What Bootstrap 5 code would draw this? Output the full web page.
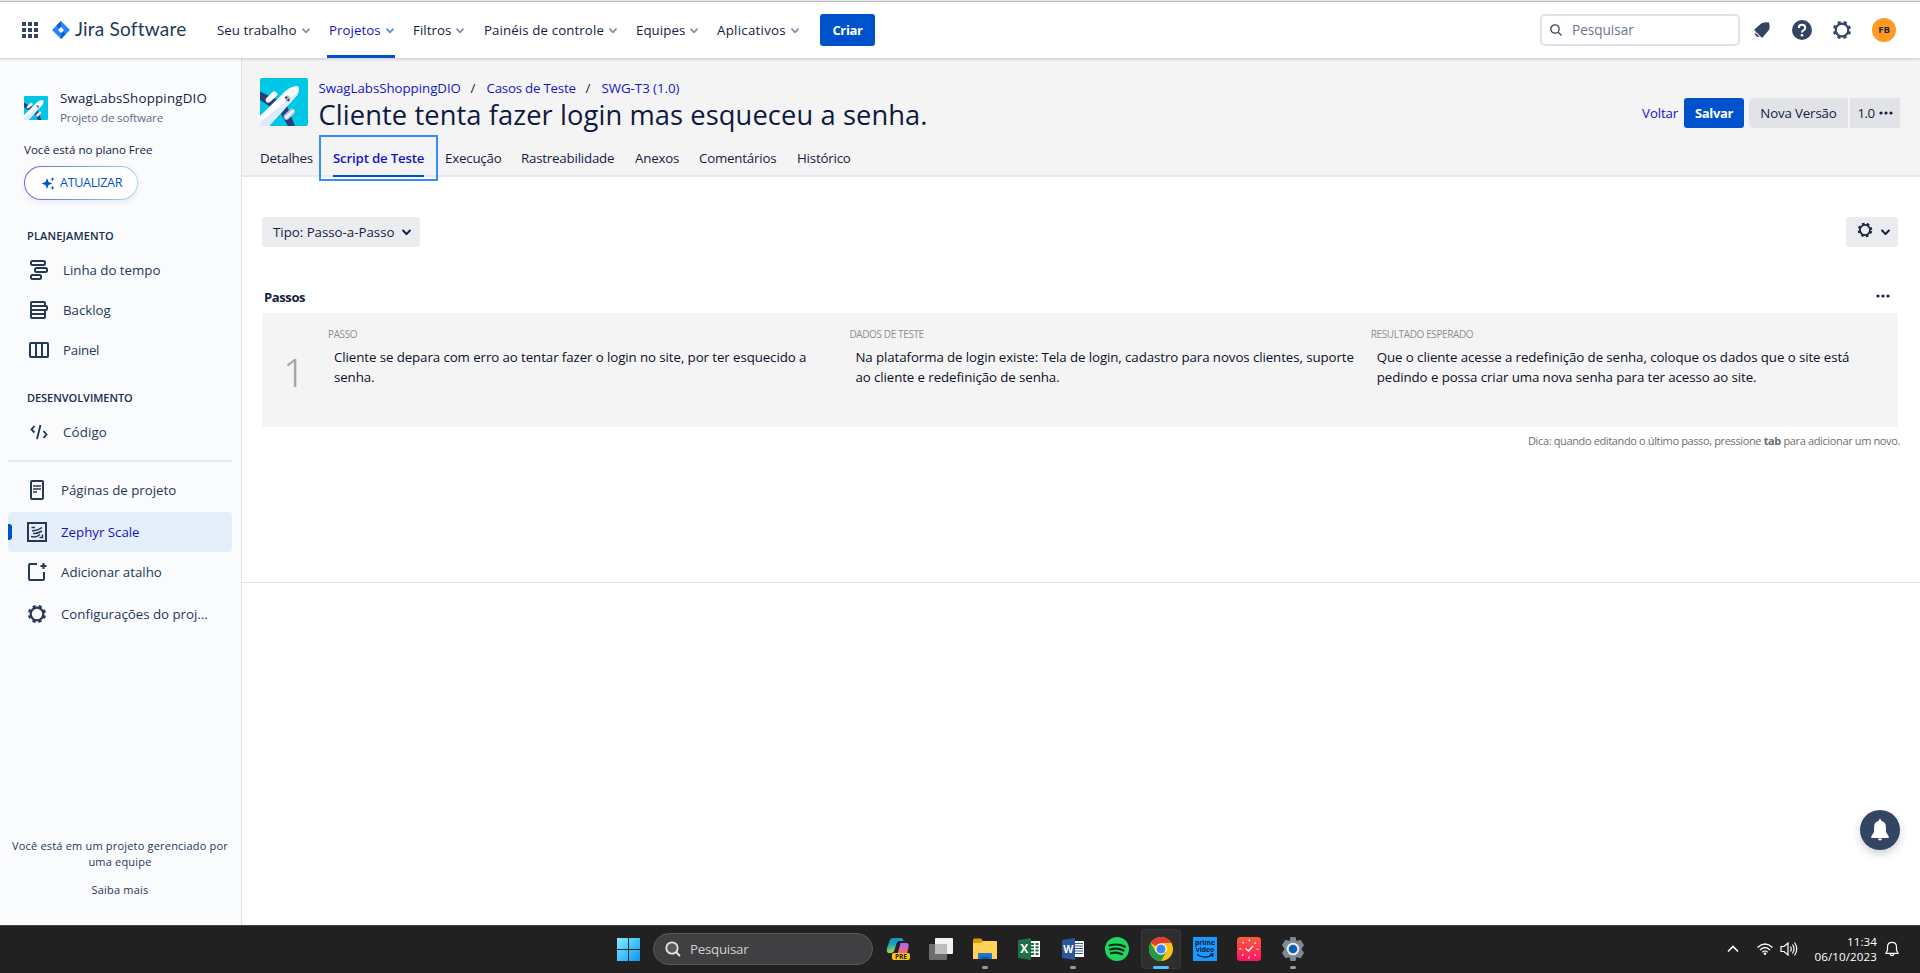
<!DOCTYPE html>
<html lang="pt-BR">
<head>
<meta charset="utf-8">
<title>Cliente tenta fazer login mas esqueceu a senha. - Jira</title>
<link href="https://cdn.jsdelivr.net/npm/bootstrap@5.3.0/dist/css/bootstrap.min.css" rel="stylesheet">
<style>
:root{--ink:#172b4d;--blue:#0052cc;--link:#1414c4}
body{font-family:"Open Sans","Noto Sans",sans-serif;font-size:13.3px;line-height:20px;color:#14213f;height:973px;overflow:hidden;background:#fff;letter-spacing:-.02px}
svg{display:block;flex:none}
a{text-decoration:none;color:inherit}
.strip{height:2px;background:#e4e4e4;border-bottom:1px solid #c0c0c0}
.topbar{height:57px;border-bottom:1px solid #d5d8de;padding:0 24px 0 22px;box-shadow:0 1px 2px rgba(9,30,66,.12);z-index:2;position:relative;background:#fff}
.logo{margin-left:14px}
.brand{font-family:Lato,sans-serif;font-size:19px;color:#253858;width:142px;margin-left:5px;letter-spacing:.22px;line-height:20px;padding-bottom:2px}
.topnav{display:grid;grid-template-columns:112px 84px 71px 152px 81px 103px;height:100%}
.topnav a{display:flex;align-items:center;gap:5px;font-weight:500;white-space:nowrap;position:relative;letter-spacing:.05px}
.topnav a:nth-child(4){letter-spacing:.1px}
.topnav a:last-child{letter-spacing:.26px}
.topnav svg{margin-top:2px;color:#8590a2}
.topnav a.on{color:var(--link)}
.topnav a.on svg{color:#5b8fe0}
.topnav a.on::after{content:"";position:absolute;left:-2px;width:68px;bottom:0;height:3px;background:var(--blue)}
.btn-jira{background:var(--blue);color:#fff;font-weight:700;font-size:13px;letter-spacing:-.36px;border:0;border-radius:3px;padding:0;line-height:20px}
.btn-criar{width:55px;height:32px}
.btn-salvar{width:60px;height:30px}
.searchbox{width:200px;height:32px;border:2px solid #dfe1e6;border-radius:5px;color:#6b778c;gap:10px;padding-left:8px;font-size:13.6px}
.who{width:24px;height:24px;margin-left:20px;background:#ff991f;font-size:9.6px;font-weight:700;color:#172b4d;letter-spacing:0}
.side{width:242px;background:#fafbfd;border-right:1px solid #dfe1e6;padding:30px 9px 27px 8px;flex:none}
.side .pname{font-weight:500;letter-spacing:.2px}
.side .psub{font-size:11.6px;margin-top:2px;color:#5e6c84;letter-spacing:-.16px}
.side .plan{font-size:11.6px;line-height:18px;margin-top:13px;font-weight:500;padding-top:1px;margin-bottom:-1px}
.side .sec{font-size:11px;font-weight:600;height:16px;line-height:16px;padding-left:19px;color:#172b4d;margin:20px 0 6px;letter-spacing:-.05px}
.side .sec1{margin-top:28px;letter-spacing:.15px}
.side .item{height:40px;padding-left:21px;color:#253858}
.side .item span{margin-left:14px;white-space:nowrap}
.side .low{padding-left:19px}
.side .gap2{margin-top:2px}
.side .sel{background:#e5eefb;border-radius:4px;color:var(--link);position:relative}
.side .sel::before{content:"";position:absolute;left:0;top:12px;width:4px;height:16px;background:var(--blue);border-radius:0 3px 3px 0}
.rule{height:2px;background:#e6e7ea;margin:8px 0}
.upg{width:114px;height:34px;border-radius:17px;border:1px solid transparent;background:linear-gradient(#fff,#fff) padding-box,linear-gradient(90deg,#7b61d8,#6fb0ea 60%,#a8dde4) border-box;color:var(--blue);font-size:12.6px;letter-spacing:-.33px;box-shadow:0 2px 6px rgba(9,30,66,.08);padding-left:17px;gap:5px}
.foot{font-size:11px;line-height:16px;color:#253858;text-align:center;letter-spacing:.19px;margin:0 -8px 0 -8px}
.phead{height:118px;background:#f4f4f5;border-bottom:2px solid #e7e8ec;padding:19px 20px 0 18px}
.crumb{height:20px;color:var(--link);display:grid;grid-template-columns:152px 16px 99px 16px auto;white-space:nowrap;letter-spacing:-.04px}
.crumb .tight{letter-spacing:-.22px}
.crumb i{font-style:normal;color:#222}
.ttl{font-size:27.3px;line-height:34px;font-weight:500;color:#0d1a40;white-space:nowrap;letter-spacing:.09px}
.tabs{display:grid;grid-template:40px/73px 112px 76px 114px 64px 98px 60px;line-height:42px;width:max-content;white-space:nowrap;letter-spacing:-.2px}
.tabs .on{color:var(--link);font-weight:600;width:91px;position:relative;border-bottom:2px solid var(--blue)}
.tabs .on::after{content:"";position:absolute;inset:-2px -14px -6px;border:2px solid #388bff}
.acts{height:30px;margin-top:20px;letter-spacing:-.16px}
.gbtn{background:#e2e3e7;height:30px;color:#14213f}
.lbtn{background:#ebecf0;height:30px;border-radius:3px}
.panel{padding:40px 0 0 20px;height:406px;border-bottom:1px solid #dcdfe4}
.steptitle{margin-top:40px;height:20px;padding:0 30px 0 2px;font-size:13px;letter-spacing:-.38px}
.step{background:#f4f4f4;height:114px;border-radius:2px;padding-top:11px;margin-top:6px;width:1636px}
.num{width:66px;padding-left:21px;font-size:39px;color:#a3a3a3;font-weight:400;line-height:40px;padding-top:28px;flex:none;font-family:"Noto Sans","Open Sans",sans-serif;font-weight:300}
.colx{width:521.4px;flex:none}
.colx h6{font-size:10px;line-height:16px;color:#8f8f8f;font-weight:400;margin:2px 0 5px;letter-spacing:-.38px}
.colx p{margin:0 0 0 6px;line-height:20px;white-space:nowrap;color:#0b1028;letter-spacing:-.09px}
.hint{font-size:11px;color:#6f6f6f;line-height:16px;text-align:right;margin-top:6px;padding-right:20px;letter-spacing:-.365px}
.fab{position:absolute;left:1860px;top:810px;width:40px;height:40px;border-radius:50%;background:#344563;box-shadow:0 4px 8px rgba(9,30,66,.2)}
.task{height:48px;background:#222122;border-top:1px solid #474747;color:#fff;padding:0 20px 1px 617px}
.pill{width:220px;height:32px;border-radius:16px;background:#403f41;border:1px solid #59585a;color:#d0d0d0;padding-left:11px;gap:9px;font-size:13.3px;letter-spacing:-.25px;margin-left:13px;margin-right:3px}
.app{width:44px;height:46px;display:flex;align-items:center;justify-content:center;position:relative}
.app.run::after{content:"";position:absolute;bottom:3px;width:6px;height:3px;border-radius:2px;background:#9a9a9a}
.app.act::before{content:"";position:absolute;inset:3px 2px 3px;background:#2f2e2f;border:1px solid #3a3a3a;border-radius:4px}
.app.act svg{position:relative}
.app.act::after{width:16px;background:#4cc2ff}
.clock{font-size:11.6px;line-height:15px;text-align:right;letter-spacing:.1px;margin:0 7px 0 16px}
</style>
<script src="https://cdn.jsdelivr.net/npm/bootstrap@5.3.0/dist/js/bootstrap.bundle.min.js"></script>
</head>
<body class="d-flex flex-column">
<svg width="0" height="0" class="position-absolute">
<defs>
<symbol id="chev" viewBox="0 0 8 8"><path d="M1 2.2 4 5.4 7 2.2" fill="none" stroke="currentColor" stroke-width="1.8" stroke-linecap="round" stroke-linejoin="round"/></symbol>
<symbol id="gear" viewBox="0 0 20 20"><circle cx="10" cy="10" r="6.3" fill="none" stroke="currentColor" stroke-width="2.2"/><circle cx="10" cy="10" r="8" fill="none" stroke="currentColor" stroke-width="2.2" stroke-dasharray="3.2 3.083" stroke-dashoffset="-1.5"/></symbol>
<symbol id="dots" viewBox="0 0 14 4"><circle cx="2" cy="2" r="1.6"/><circle cx="7" cy="2" r="1.6"/><circle cx="12" cy="2" r="1.6"/></symbol>
<symbol id="plane" viewBox="0 0 48 48"><rect width="48" height="48" rx="2" fill="#00c7e5"/><path d="M0 13.500 18 22 12 30 0 22z" fill="#253f7d"/><path d="M21 36 27 28 35 48H28z" fill="#253f7d"/><path d="M6 20.500 12.500 14Q14.500 12.500 16.500 14.500T16.500 18L10 24Q7 25.500 6 23.500T6 20.500z" fill="#fff"/><path d="M24 37 31 30.500Q34 30 34.600 32.500T33.500 36.500L28 41.500Q25 42.500 24 40.500T24 37z" fill="#b3c3de"/><path d="M25 38.500 33.500 31l1 2.500L26 41.500z" fill="#eef3fb"/><path d="M0 38 26 12.500Q32 7.800 37.500 8 39.500 9 38.800 13 38 16.500 35.500 19L9 48H0z" fill="#fff"/><path d="M0 44 36 15.500 38.500 14Q38 16.500 35.500 19L9 48H0z" fill="#deebff"/><path d="M24.500 19 28 17.300 30.500 20.500 28.800 24 26 23.500z" fill="#a9b8d0"/><circle cx="26.200" cy="19.500" r="1.100" fill="#172b4d"/><circle cx="28.400" cy="22" r="1.100" fill="#172b4d"/></symbol>
</defs></svg>
<div class="strip"></div>
<header class="topbar d-flex align-items-center">
 <svg width="16" height="16" viewBox="0 0 16 16" fill="#344563"><path d="M0 0h4v4H0zM6 0h4v4H6zM12 0h4v4h-4zM0 6h4v4H0zM6 6h4v4H6zM12 6h4v4h-4zM0 12h4v4H0zM6 12h4v4H6zM12 12h4v4h-4z"/></svg>
 <svg class="logo" width="18" height="18" viewBox="0 0 18 18"><path d="M9 0 18 9 9 18 0 9z" fill="#2684ff"/><path d="M9 0 4.500 4.500Q6.500 8 9 6z" fill="#0b5bd3"/><path d="M9 18 13.500 13.500Q11.500 10 9 12z" fill="#0b5bd3"/><path d="M9 6 12 9 9 12 6 9z" fill="#fff"/></svg>
 <div class="brand text-nowrap">Jira Software</div>
 <nav class="topnav">
  <a href="#">Seu trabalho<svg width="8" height="8"><use href="#chev"/></svg></a>
  <a href="#" class="on">Projetos<svg width="8" height="8"><use href="#chev"/></svg></a>
  <a href="#">Filtros<svg width="8" height="8"><use href="#chev"/></svg></a>
  <a href="#">Painéis de controle<svg width="8" height="8"><use href="#chev"/></svg></a>
  <a href="#">Equipes<svg width="8" height="8"><use href="#chev"/></svg></a>
  <a href="#">Aplicativos<svg width="8" height="8"><use href="#chev"/></svg></a>
 </nav>
 <button class="btn btn-jira btn-criar">Criar</button>
 <div class="searchbox d-flex align-items-center ms-auto"><svg width="12" height="12" viewBox="0 0 12 12" fill="none" stroke="#344563" stroke-width="1.3"><circle cx="5" cy="5" r="4.2"/><path d="M8 8l3.500 3.500"/></svg>Pesquisar</div>
 <svg width="16" height="16" viewBox="0 0 16 16" fill="#344563" style="margin-left:14px"><path d="M7.500 1.300Q11 0 15 .5 16 3 15.300 7.500L8.800 15.300Q8 16 7.300 15.200L.6 8.400Q0 7.700.9 7z"/><path d="M1.200 10.500 5.500 14.700Q3.500 15.500 2 14T1.200 10.500z"/></svg>
 <svg width="20" height="20" viewBox="0 0 20 20" style="margin-left:22px"><circle cx="10" cy="10" r="10" fill="#344563"/><path d="M6.800 8Q6.800 4.800 10 4.800T13.200 7.800Q13.200 9.500 11.400 10.300 10 11 10 12.500" fill="none" stroke="#fff" stroke-width="2"/><circle cx="10" cy="15.200" r="1.300" fill="#fff"/></svg>
 <svg width="20" height="20" color="#344563" style="margin-left:20px"><use href="#gear"/></svg>
 <div class="who rounded-circle d-flex align-items-center justify-content-center">FB</div>
</header>
<div class="d-flex flex-grow-1">
 <aside class="side d-flex flex-column">
  <div class="d-flex align-items-center ps-3">
   <svg width="24" height="24"><use href="#plane"/></svg>
   <div style="margin-left:12px;line-height:18px"><div class="pname">SwagLabsShoppingDIO</div><div class="psub">Projeto de software</div></div>
  </div>
  <div class="plan ps-3">Você está no plano Free</div>
  <div class="upg d-flex align-items-center ms-3 mt-2"><svg width="13" height="13" viewBox="0 0 13 13" fill="#0052cc"><path d="M5 1 6.500 5 10.500 6.500 6.500 8 5 12 3.500 8-.5 6.500 3.500 5z"/><path d="M10.500 0 11.100 1.500 12.600 2.100 11.100 2.700 10.500 4.200 9.900 2.700 8.400 2.100 9.900 1.500zM10.500 8.800 11.100 10.300 12.600 10.900 11.100 11.500 10.500 13 9.900 11.500 8.400 10.900 9.900 10.300z"/></svg>ATUALIZAR</div>
  <div class="sec sec1">PLANEJAMENTO</div>
  <div class="item d-flex align-items-center"><svg width="20" height="20" viewBox="0 0 20 20" fill="none" stroke="#253858" stroke-width="2"><rect x="2" y="1" width="14" height="4" rx="1.5"/><rect x="6" y="8" width="12" height="4" rx="1.5"/><rect x="2" y="15" width="10" height="4" rx="1.5"/></svg><span>Linha do tempo</span></div>
  <div class="item d-flex align-items-center"><svg width="20" height="20" viewBox="0 0 20 20" fill="none" stroke="#253858" stroke-width="2"><path d="M2 6V3Q2 2 3 2H15Q16 2 16 3V6M2 10V17Q2 18 3 18H15Q16 18 16 17V10M2 14H16"/><rect x="2" y="6" width="16" height="4" rx="1"/></svg><span>Backlog</span></div>
  <div class="item d-flex align-items-center"><svg width="20" height="20" viewBox="0 0 20 20" fill="none" stroke="#253858" stroke-width="2"><rect x="1" y="3" width="18" height="14" rx="1"/><path d="M7 3V17M13 3V17"/></svg><span style="letter-spacing:-.25px">Painel</span></div>
  <div class="sec">DESENVOLVIMENTO</div>
  <div class="item d-flex align-items-center"><svg width="20" height="20" viewBox="0 0 20 20" fill="none" stroke="#253858" stroke-width="1.9"><path d="M5.500 4 2.500 7.500 5.500 10.500M14.500 9 17.500 12.500 14.500 16M11.500 3 8 17"/></svg><span style="letter-spacing:.15px">Código</span></div>
  <div class="rule"></div>
  <div class="item low d-flex align-items-center"><svg width="20" height="20" viewBox="0 0 20 20" fill="none" stroke="#253858" stroke-width="2"><rect x="4" y="1" width="12" height="18" rx="1"/><path d="M6 6H14M6 9H14M6 12H10" stroke-width="1.7"/></svg><span>Páginas de projeto</span></div>
  <div class="item low sel gap2 d-flex align-items-center"><svg width="20" height="20" viewBox="0 0 20 20" fill="none" stroke="#253858" stroke-width="2"><rect x="1" y="1" width="18" height="18"/><path d="M4.500 5.500H8M5 8.500Q9 9.500 15 5.500M6 11.500Q10 12 15 9M4 14.500Q9 16 13 12.500M12.500 15.500H15.500V12.500" stroke-width="1.5"/></svg><span>Zephyr Scale</span></div>
  <div class="item low d-flex align-items-center"><svg width="20" height="20" viewBox="0 0 20 20" fill="none" stroke="#253858" stroke-width="2"><path d="M10 2H3Q2 2 2 3V17Q2 18 3 18H16Q17 18 17 17V10M16.500 1V7M13.500 4H19.500"/></svg><span>Adicionar atalho</span></div>
  <div class="item low gap2 d-flex align-items-center"><svg width="20" height="20" color="#253858"><use href="#gear"/></svg><span>Configurações do proj...</span></div>
  <div class="foot mt-auto">Você está em um projeto gerenciado por<br>uma equipe<div style="margin-top:12px">Saiba mais</div></div>
 </aside>
 <main class="flex-grow-1">
  <section class="phead">
   <div class="d-flex" style="height:59px">
    <svg width="48" height="48"><use href="#plane"/></svg>
    <div style="margin-left:10.5px">
     <div class="crumb"><span>SwagLabsShoppingDIO</span><i>/</i><span class="tight">Casos de Teste</span><i>/</i><span>SWG-T3 (1.0)</span></div>
     <div class="ttl">Cliente tenta fazer login mas esqueceu a senha.</div>
    </div>
    <div class="acts d-flex align-items-center ms-auto">
     <a href="#" style="color:var(--link);margin-right:6px">Voltar</a>
     <button class="btn btn-jira btn-salvar">Salvar</button>
     <div class="gbtn d-flex align-items-center justify-content-center rounded-start" style="width:99px;margin-left:5px">Nova Versão</div>
     <div class="gbtn d-flex align-items-center justify-content-center" style="width:50px;margin-left:2px;gap:4px"><span style="letter-spacing:-.5px">1.0</span><svg width="14" height="4" fill="#14213f"><use href="#dots"/></svg></div>
    </div>
   </div>
   <nav class="tabs"><span>Detalhes</span><span class="on">Script de Teste</span><span>Execução</span><span>Rastreabilidade</span><span>Anexos</span><span>Comentários</span><span>Histórico</span></nav>
  </section>
  <section class="panel">
   <div class="d-flex justify-content-between" style="padding-right:22px">
    <div class="lbtn d-flex align-items-center" style="width:158px;padding-left:11px;gap:8px">Tipo: Passo-a-Passo<svg width="9" height="9"><use href="#chev"/></svg></div>
    <div class="lbtn d-flex align-items-center justify-content-center" style="width:52px;gap:8px;padding-left:2px"><svg width="16" height="16" style="margin-top:-4px"><use href="#gear"/></svg><svg width="9" height="9"><use href="#chev"/></svg></div>
   </div>
   <div class="steptitle d-flex align-items-center justify-content-between fw-bold">Passos<svg width="14" height="4" fill="#14213f" style="margin-top:-2px"><use href="#dots"/></svg></div>
   <div class="step d-flex">
    <div class="num">1</div>
    <div class="colx"><h6>PASSO</h6><p>Cliente se depara com erro ao tentar fazer o login no site, por ter esquecido a<br>senha.</p></div>
    <div class="colx"><h6>DADOS DE TESTE</h6><p>Na plataforma de login existe: Tela de login, cadastro para novos clientes, suporte<br>ao cliente e redefinição de senha.</p></div>
    <div class="colx"><h6>RESULTADO ESPERADO</h6><p>Que o cliente acesse a redefinição de senha, coloque os dados que o site está<br>pedindo e possa criar uma nova senha para ter acesso ao site.</p></div>
   </div>
   <div class="hint">Dica: quando editando o último passo, pressione <b>tab</b> para adicionar um novo.</div>
  </section>
 </main>
</div>
<div class="fab d-flex align-items-center justify-content-center"><svg width="20" height="22" viewBox="0 0 20 22" fill="#fff"><path d="M10 0Q11.300 0 11.300 1.700 16 3 16 8.500V13L18.500 17Q19.500 19 17.500 19H2.500Q.5 19 1.500 17L4 13V8.500Q4 3 8.700 1.700 8.700 0 10 0zM8 19.500H12Q12 21.500 10 21.500T8 19.500z"/></svg></div>
<footer class="task d-flex align-items-center">
 <svg width="23" height="23" viewBox="0 0 23 23"><defs><linearGradient id="w" x2="1" y2="1"><stop stop-color="#7ff0ff"/><stop offset="1" stop-color="#0a95f5"/></linearGradient></defs><path d="M0 0H11V11H0zM12 0H23V11H12zM0 12H11V23H0zM12 12H23V23H12z" fill="url(#w)"/></svg>
 <div class="pill d-flex align-items-center"><svg width="16" height="16" viewBox="0 0 16 16" fill="none" stroke="#e8e8e8" stroke-width="1.8"><circle cx="7" cy="7" r="5.7" fill="#5b5b5c"/><path d="M11 11l4 4"/></svg>Pesquisar</div>
 <div class="app"><svg width="24" height="24" viewBox="0 0 24 24"><defs><linearGradient id="c1" x2=".3" y2="1"><stop stop-color="#1a7fe0"/><stop offset=".5" stop-color="#19a8b0"/><stop offset="1" stop-color="#c6d93a"/></linearGradient><linearGradient id="c2" x2="0" y2="1"><stop stop-color="#a767f0"/><stop offset="1" stop-color="#ff6a6a"/></linearGradient></defs><path d="M7 1H15Q17 1 17.500 4H13Q11 4 10 8L8.500 13Q7.500 16 5 16H3Q0 16 1 11L3.500 4Q4.500 1 7 1z" fill="url(#c1)"/><path d="M15 6H20Q23.500 6 22.500 10L21 17H11.500L14 8Q14.300 6 15 6z" fill="url(#c2)"/><rect x="6" y="16" width="18" height="7" rx="2" fill="#fcc419"/><text x="15" y="22" font-size="6.5" font-weight="700" text-anchor="middle" fill="#222" font-family="Open Sans">PRE</text></svg></div>
 <div class="app" style="margin-left:-1px"><svg width="24" height="24" viewBox="0 0 24 24"><rect y="7" width="18" height="16" rx="1" fill="#6d6d6d"/><rect x="6" y="1" width="18" height="16" rx="1" fill="#f2f2f2"/><path d="M6 7H18V17H6z" fill="#bdbdbd"/></svg></div>
 <div class="app run"><svg width="24" height="24" viewBox="0 0 24 24"><path d="M0 3Q0 1.500 1.500 1.500H8L10 4H22V9H0z" fill="#dd9b0b"/><path d="M0 7Q0 6 1 6H8L10 4H23Q24 4 24 5V22H0z" fill="#ffd257"/><path d="M5 22V17Q5 16 6 16H18Q19 16 19 17V22z" fill="#1a78cc"/><path d="M8 19.500H16V22H8z" fill="#0b5aa0"/></svg></div>
 <div class="app"><svg width="24" height="24" viewBox="0 0 24 24"><path d="M12 4H23V20H12z" fill="#fff"/><path d="M14 6H17V8H14zM18.500 6H21.500V8H18.500zM14 9.300H17V11.300H14zM18.500 9.300H21.500V11.300H18.500zM14 12.600H17V14.600H14zM18.500 12.600H21.500V14.600H18.500zM14 16H17V18H14zM18.500 16H21.500V18H18.500z" fill="#1e7145"/><path d="M1 3 14 1V23L1 21z" fill="#1e7145"/><text x="7.300" y="16.300" font-size="12" font-weight="700" text-anchor="middle" fill="#fff" font-family="Open Sans">X</text></svg></div>
 <div class="app run"><svg width="24" height="24" viewBox="0 0 24 24"><path d="M12 4H23V20H12z" fill="#fff"/><path d="M14 6.500H22M14 9H22M14 11.500H22M14 14H22M14 16.500H22" stroke="#2b579a"/><path d="M1 3 14 1V23L1 21z" fill="#2b579a"/><text x="7.300" y="16" font-size="10.500" font-weight="700" text-anchor="middle" fill="#fff" font-family="Open Sans">W</text></svg></div>
 <div class="app"><svg width="24" height="24" viewBox="0 0 24 24"><circle cx="12" cy="12" r="12" fill="#1ed760"/><path d="M4.500 8.500Q13 6 20 9.800M5 12.500Q12.500 10.300 18.500 13.500M5.800 16.200Q12 14.500 17 17.200" fill="none" stroke="#15281b" stroke-width="2.2" stroke-linecap="round"/></svg></div>
 <div class="app run act"><svg width="24" height="24" viewBox="0 0 24 24"><circle cx="12" cy="12" r="12" fill="#fbc116"/><path d="M12 12 1.600 6A12 12 0 0 1 22.400 6H12z" fill="#e33b2e"/><path d="M12 12 17.200 15 12 24A12 12 0 0 1 1.600 6L6.800 15z" fill="#229a46"/><circle cx="12" cy="12" r="5.8" fill="#fff"/><circle cx="12" cy="12" r="4.6" fill="#4285f4"/></svg></div>
 <div class="app"><svg width="24" height="24" viewBox="0 0 24 24"><path d="M0 0H24V24H0z" fill="#1a98ff"/><g font-family="Open Sans" font-weight="700" font-size="6.800" text-anchor="middle" fill="#0a1a33"><text x="12" y="8">prime</text><text x="12" y="15">video</text></g><path d="M4 17.500Q12 22.500 19 18M17 17.200 20 17 19.500 20" fill="none" stroke="#0a1a33" stroke-width="1.2"/></svg></div>
 <div class="app"><svg width="24" height="24" viewBox="0 0 24 24"><defs><linearGradient id="r" x2="0" y2="1"><stop stop-color="#ff5a36"/><stop offset="1" stop-color="#ff1463"/></linearGradient></defs><rect width="24" height="24" rx="3.5" fill="url(#r)"/><circle cx="12" cy="12" r="8.600" fill="none" stroke="#fff" stroke-width="2" stroke-dasharray="1.3 5.454" stroke-dashoffset=".65"/><path d="M8.500 11.500 11.500 14 16 9" fill="none" stroke="#fff" stroke-width="1.5"/></svg></div>
 <div class="app run"><svg width="24" height="24" viewBox="0 0 24 24"><path d="M9.500 0H14.500L15.500 4 19.500 2.800 23 8 20.500 12 23 16 19.500 21.200 15.500 20 14.500 24H9.500L8.500 20 4.500 21.200 1 16 3.500 12 1 8 4.500 2.800 8.500 4z" fill="#7f8993"/><circle cx="12" cy="12" r="6.300" fill="#e8edf2"/><circle cx="12" cy="12" r="4.300" fill="#0f5fae"/></svg></div>
 <div class="d-flex align-items-center ms-auto">
  <svg width="12" height="8" viewBox="0 0 12 8" fill="none" stroke="#fff" stroke-width="1.6"><path d="M1 6.500 6 1.500 11 6.500"/></svg>
  <svg width="18" height="14" viewBox="0 0 18 14" fill="none" stroke="#fff" stroke-width="1.3" style="margin-left:17px"><path d="M1.500 5.500Q9-1.500 16.500 5.500M4 8Q9 3 14 8M6.300 10.200Q9 7.500 11.700 10.200"/><circle cx="9" cy="11.700" r="1.3" fill="#fff" stroke="none"/></svg>
  <svg width="18" height="16" viewBox="0 0 18 16" fill="none" stroke="#fff" stroke-width="1.2" style="margin-left:6px"><path d="M1 5.500H4L8 2V14L4 10.500H1zM10.500 5.500Q12 8 10.500 10.500M12.500 3.500Q15.500 8 12.500 12.500M14.500 1.500Q19 8 14.500 14.500"/></svg>
  <div class="clock">11:34<br>06/10/2023</div>
  <svg width="16" height="16" viewBox="0 0 16 16" fill="none" stroke="#fff" stroke-width="1.2"><path d="M3.500 6Q3.500 1.300 8 1.300T12.500 6V9L14 12.300H2L3.500 9zM6 12.500Q6.500 14.700 8 14.700T10 12.500"/></svg>
 </div>
</footer>
</body>
</html>
